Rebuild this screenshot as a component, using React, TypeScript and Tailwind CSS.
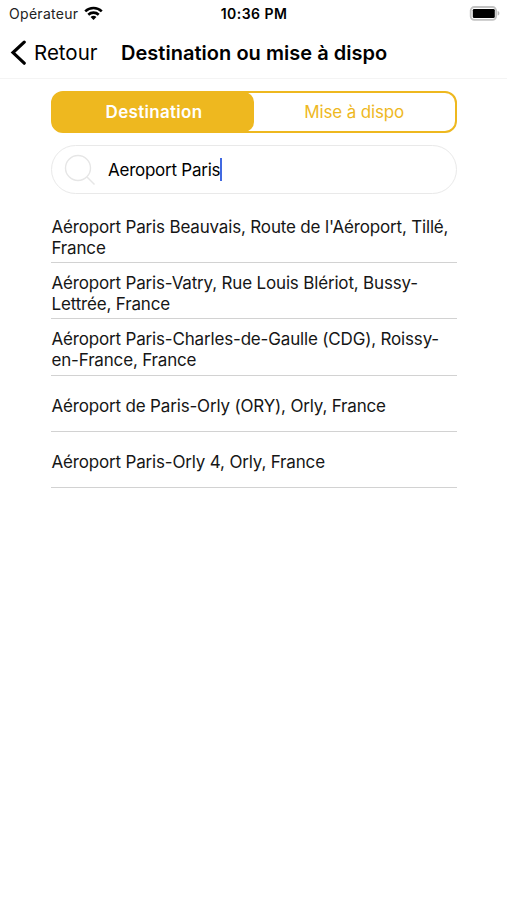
const results: string[][] = [
  ["Aéroport Paris Beauvais, Route de l'Aéroport, Tillé,", "France"],
  ["Aéroport Paris-Vatry, Rue Louis Blériot, Bussy-", "Lettrée, France"],
  ["Aéroport Paris-Charles-de-Gaulle (CDG), Roissy-", "en-France, France"],
  ["Aéroport de Paris-Orly (ORY), Orly, France"],
  ["Aéroport Paris-Orly 4, Orly, France"],
];

function WifiIcon() {
  return (
    <svg width="19" height="15" viewBox="0 0 20 15" fill="none" stroke="#000" strokeWidth="2.7">
      <path d="M1.3 5.2a12.6 12.6 0 0 1 17.4 0" />
      <path d="M4.5 8.8a8 8 0 0 1 11 0" />
      <path d="M10 14.4l-3.1-3.1a4.4 4.4 0 0 1 6.2 0z" fill="#000" stroke="none" />
    </svg>
  );
}

function BatteryIcon() {
  return (
    <svg width="31" height="15" viewBox="0 0 31 15">
      <rect x="1.7" y="1" width="25.4" height="12.8" rx="3.6" fill="#fff" stroke="#c2c2c2" strokeWidth="1.8" />
      <rect x="3.8" y="2.9" width="22" height="9.2" rx="1.4" fill="#000" />
      <path d="M28.6 5c2.4.6 2.4 4 0 4.6z" fill="#b9b9b9" />
    </svg>
  );
}

function StatusBar() {
  return (
    <div className="grid h-[27px] grid-cols-3 items-center pr-[7px] pl-[9px]">
      <div className="flex items-center gap-[6px]">
        <span className="text-[14px] tracking-[0.3px] text-[#222]">Opérateur</span>
        <WifiIcon />
      </div>
      <span className="pr-px pb-px text-center text-[14px] font-semibold tracking-[0.45px]">10:36 PM</span>
      <div className="flex justify-end">
        <BatteryIcon />
      </div>
    </div>
  );
}

export default function App() {
  return (
    <div className="min-h-[900px] w-[507px] bg-white font-['Inter',sans-serif] text-black">
      <StatusBar />
      <header className="flex h-[52px] items-center border-b border-[#f4f4f4] pl-[10px]">
        <svg width="17" height="26" viewBox="0 0 17 26" fill="none" stroke="#000" strokeWidth="3.2" strokeLinecap="round">
          <path d="M14.2 2.2L3 12.6l11.2 10.6" />
        </svg>
        <span className="ml-[7px] w-[87px] pt-px text-[20.5px] whitespace-nowrap">Retour</span>
        <h1 className="text-[20px] font-semibold tracking-[0.03px] whitespace-nowrap">Destination ou mise à dispo</h1>
      </header>
      <main className="pt-3 pr-[50.5px] pl-[51px]">
        <div className="flex h-[42px] rounded-[12px] border-[2.5px] border-[#eeb81f] text-[17px]">
          <div className="-my-px -ml-px flex w-[202px] items-center justify-center rounded-[10px] bg-[#eeb81f] pt-px pl-[2px] font-semibold tracking-[0.3px] text-white">
            Destination
          </div>
          <div className="flex flex-1 items-center justify-center pt-px tracking-[-0.15px] text-[#eeb81f]">Mise à dispo</div>
        </div>
        <div className="mt-3 flex h-[49px] items-center rounded-full border border-[#e9e9e9] pl-3">
          <svg width="32" height="32" viewBox="0 0 32 32" fill="none" stroke="#e6e6e6" strokeWidth="1.4">
            <circle cx="14" cy="14" r="12.5" />
            <path d="M23 23l7.5 7.5" />
          </svg>
          <span className="ml-3 pt-[2.5px] text-[17px] tracking-[-0.25px] whitespace-nowrap">Aeroport Paris</span>
          <span className="h-[23px] w-[2px] bg-[#4169e1]" />
        </div>
        <ul className="mt-[13px]">
          {results.map((lines) => (
            <li
              key={lines[0]}
              className="flex h-[56.2px] flex-col justify-center border-b-[1.5px] border-[#d2d2d2] pt-[6px] pl-[0.5px] text-[17px] leading-[21px] tracking-[-0.17px] text-[#161616]"
            >
              {lines.map((line) => (
                <span key={line} className="whitespace-nowrap">
                  {line}
                </span>
              ))}
            </li>
          ))}
        </ul>
      </main>
    </div>
  );
}
